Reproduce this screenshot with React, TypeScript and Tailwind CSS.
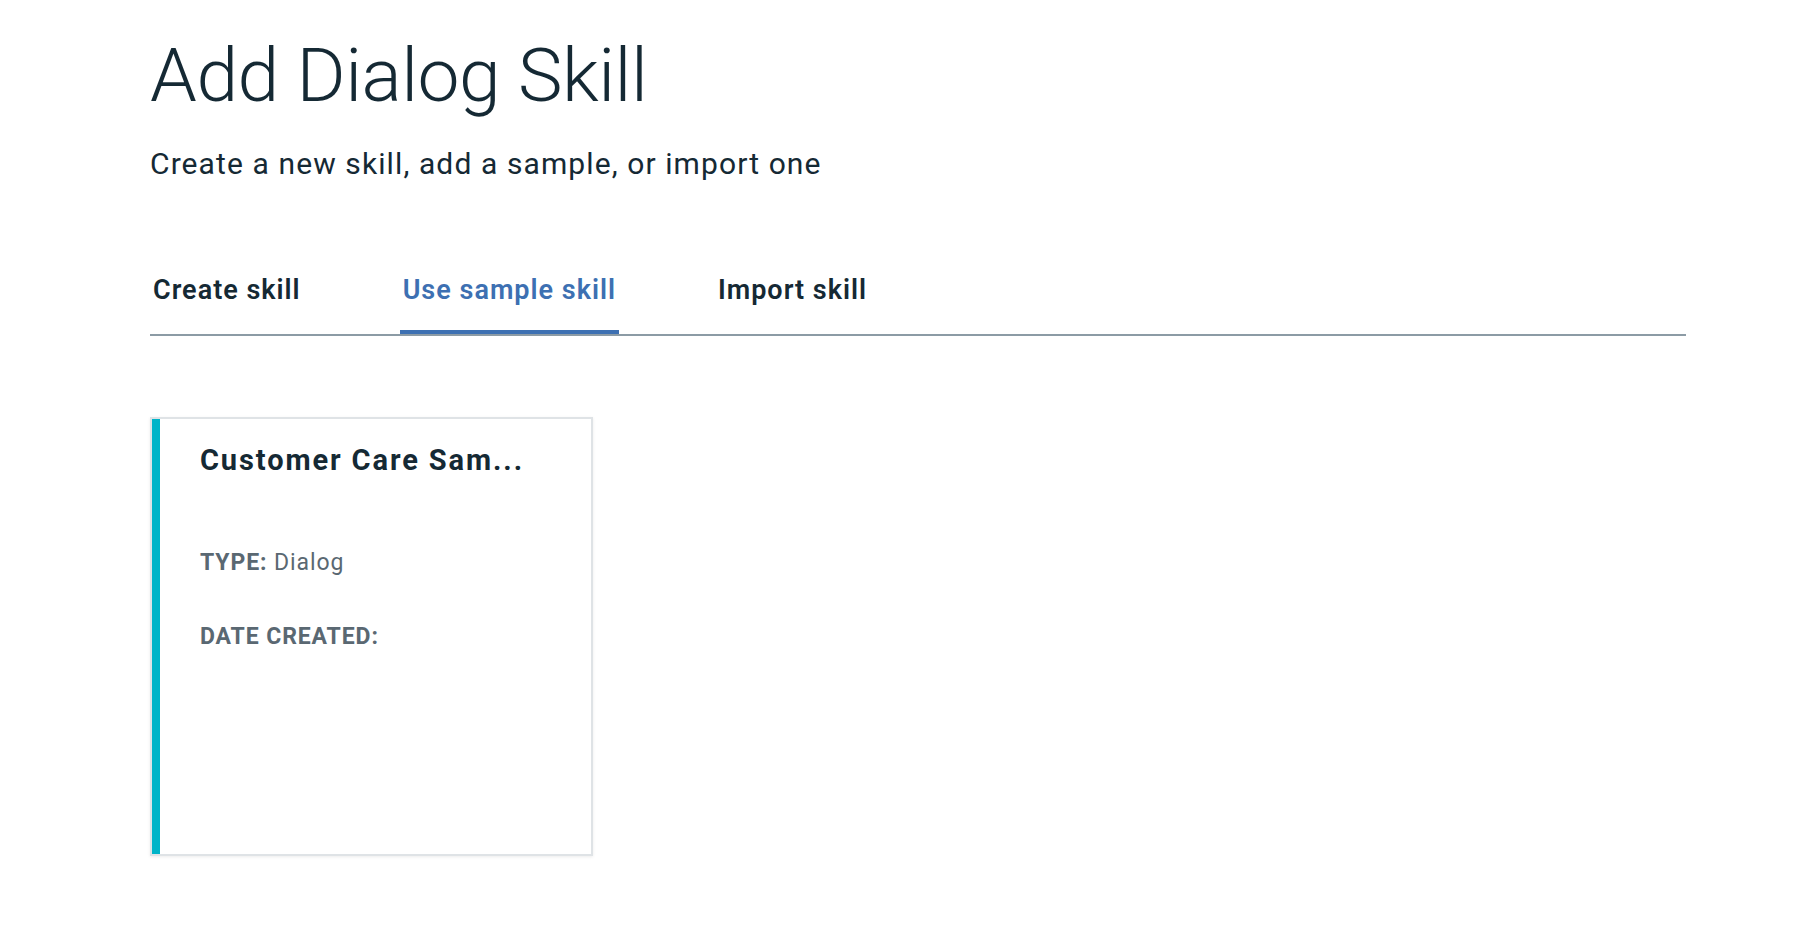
import { useState } from 'react';

const TABS = ['Create skill', 'Use sample skill', 'Import skill'];

export default function App() {
  const [active, setActive] = useState(1);

  return (
    <main
      className="min-h-screen w-full bg-white pl-[150px] text-[#152934]"
      style={{ fontFamily: 'Roboto, "Liberation Sans", sans-serif' }}
    >
      <h1 className="pt-[38px] text-[75px] font-light leading-none tracking-[-0.5px]">Add Dialog Skill</h1>
      <p className="mt-[36px] text-[30px] leading-none tracking-[1.1px]">
        Create a new skill, add a sample, or import one
      </p>

      <nav className="mt-[98px] flex w-[1536px] gap-[96px] border-b-2 border-[#8c9ba5]">
        {TABS.map((tab, i) => (
          <button
            key={tab}
            onClick={() => setActive(i)}
            className={`border-b-4 px-[3px] pb-[26px] text-[27px] font-semibold leading-none tracking-[1px] ${
              i === active ? 'border-[#3d70b2] text-[#3d70b2]' : 'border-transparent text-[#152934]'
            }`}
          >
            {tab}
          </button>
        ))}
      </nav>

      <section className="mt-[81px] flex h-[439px] w-[443px] border-2 border-[#dfe3e6] bg-white shadow-[0_1px_3px_rgba(0,0,0,0.08)]">
        <div className="w-2 shrink-0 bg-[#00b4c8]" />
        <div className="flex flex-col pl-[40px] pt-[27px]">
          <h2 className="text-[29px] font-bold leading-none tracking-[1.9px] text-[#152934]">Customer Care Sam...</h2>
          <p className="mt-[76px] text-[23px] leading-none tracking-[0.9px] text-[#5a6872]">
            <span className="font-bold">TYPE:</span> Dialog
          </p>
          <p className="mt-[51px] text-[23px] font-bold leading-none tracking-[0.9px] text-[#5a6872]">
            DATE CREATED:
          </p>
        </div>
      </section>
    </main>
  );
}
